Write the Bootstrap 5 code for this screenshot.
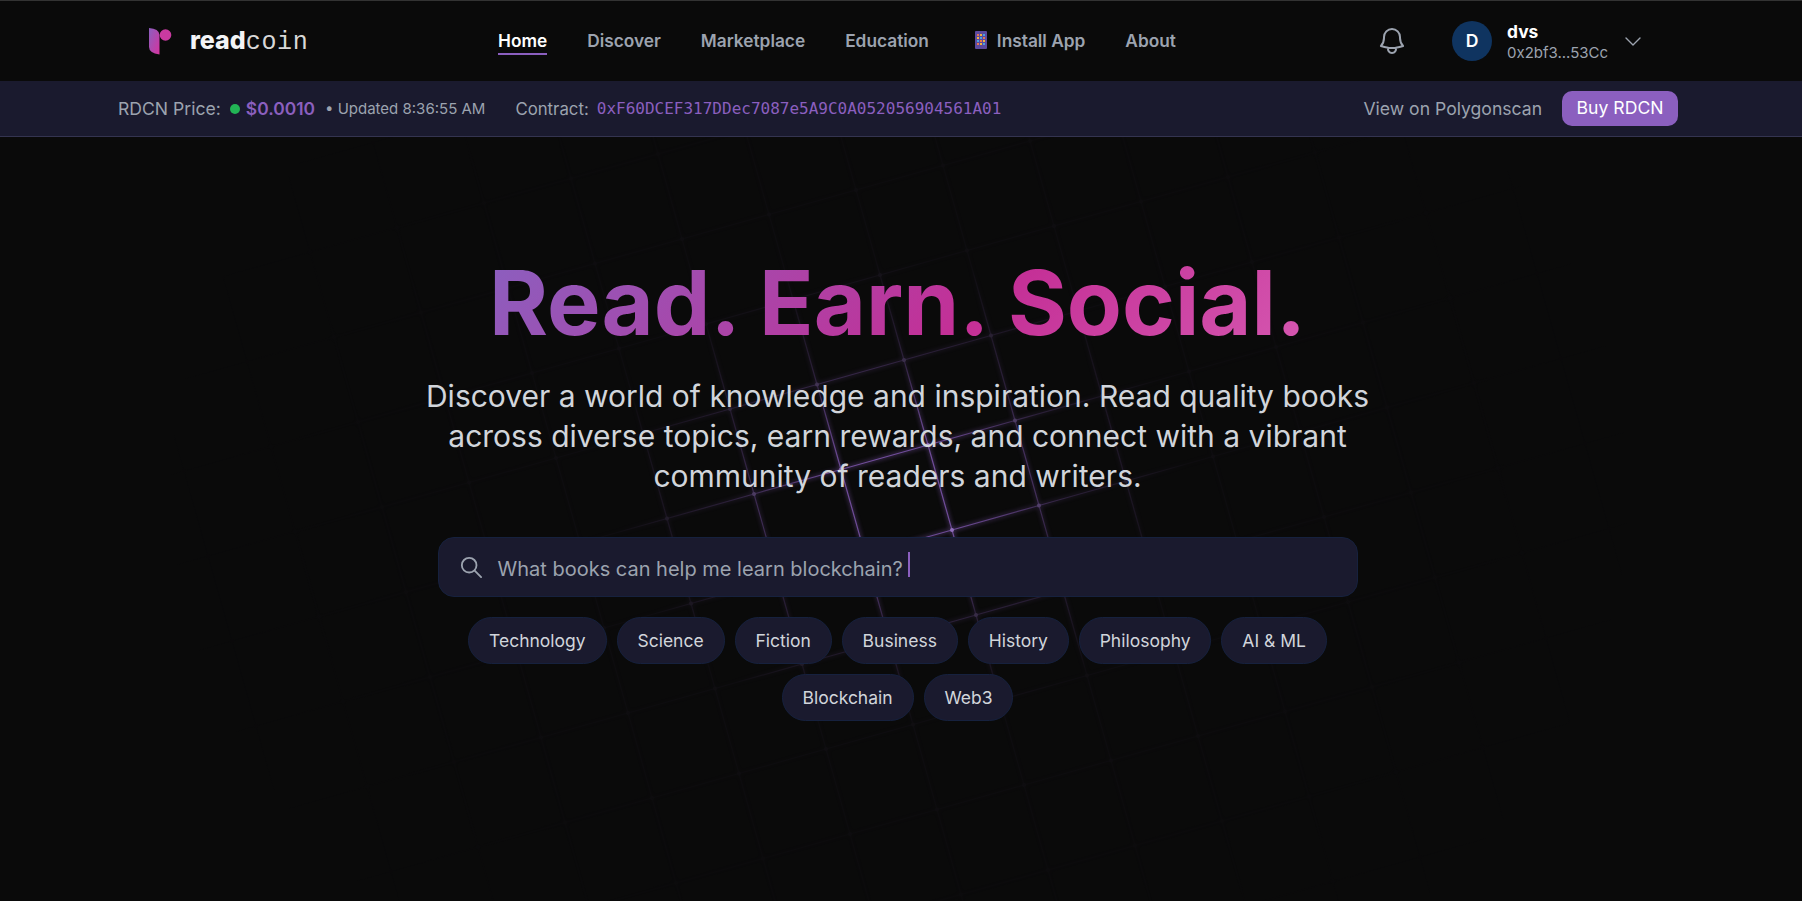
<!DOCTYPE html>
<html lang="en">
<head>
    <meta charset="UTF-8">
    <meta name="viewport" content="width=device-width, initial-scale=1.0">
    <title>Readcoin</title>
    <link href="https://cdn.jsdelivr.net/npm/bootstrap@5.3.0/dist/css/bootstrap.min.css" rel="stylesheet">
    <style>
        body {
            background: #0a0a0a;
            font-family: Inter, "Liberation Sans", sans-serif;
            color: #d1d5db;
            min-height: 901px;
            overflow: hidden;
        }
        .top-nav {
            height: 81px;
            border-top: 1px solid #333;
            padding-left: 148px;
        }
        .brand-mark { width: 24px; height: 28px; margin-right: 18px; }
        .brand-name { font-size: 25px; color: #f3f4f6; font-weight: 800; line-height: 30px; margin-top: 1px; }
        .brand-name span { font-family: "Liberation Mono", monospace; font-weight: 400; letter-spacing: .7px; color: #d8d8d8; }
        .main-links { position: absolute; left: 498px; top: 29px; gap: 40px; }
        .main-link { font-size: 17.3px; font-weight: 600; color: #9ca3af; text-decoration: none; line-height: 22px; padding-bottom: 1px; border-bottom: 2px solid transparent; }
        .main-link.active { color: #fff; font-weight: 600; border-bottom-color: #8b5fbf; }
        .app-glyph { width: 12px; height: 18px; margin-left: 6px; margin-right: 10px; vertical-align: -2px; }
        .user-box { position: absolute; left: 1376px; top: 0; height: 80px; }
        .avatar-d { width: 40px; height: 40px; background: #0f3460; color: #fff; font-weight: 600; font-size: 17.6px; margin: 0 15px 0 44px; }
        .user-info { margin-top: 2px; }
        .user-name { font-size: 17.4px; font-weight: 700; color: #fff; line-height: 22px; }
        .user-addr { font-size: 15px; color: #9ca3af; line-height: 20px; }
        .price-bar {
            height: 56px;
            background: #1a1a2e;
            border-bottom: 1px solid #343450;
            padding-left: 118px;
            padding-right: 124px;
            padding-top: 2px;
            font-size: 17.6px;
            color: #9ca3af;
        }
        .price-dot { width: 10px; height: 10px; background: #22b455; margin: 0 6px 0 9px; }
        .price-val { font-size: 17.4px; font-weight: 600; color: #8b5fbf; }
        .price-time { font-size: 15px; margin-left: 10px; }
        .contract-label { font-size: 16.8px; margin-left: 30px; }
        .contract-addr { font-family: "DejaVu Sans Mono", monospace; font-size: 16px; color: #8b5fbf; margin-left: 8px; }
        .buy-btn { background: #8b5fbf; color: #fff; font-size: 17.6px; border: 0; border-radius: 10px; padding: 0 14.5px; height: 35px; margin: -2px 0 0 20px; }
        .hero { position: relative; height: 764px; padding-right: 7px; }
        .hero-grid { position: absolute; left: 0; top: 0; }
        .hero-body { position: relative; width: 1000px; margin: 0 auto; padding-top: 121px; }
        .hero-title {
            font-size: 90px;
            font-weight: 700;
            line-height: 90px;
            margin-bottom: 28px;
            background: linear-gradient(135deg, #8b5fbf 0%, #c42f96 60%, #d557b0 100%);
            -webkit-background-clip: text;
            background-clip: text;
            color: transparent;
            display: inline-block;
        }
        .hero-sub { font-size: 30px; line-height: 40px; color: #d1d5db; width: 960px; margin: 0 auto 41px; }
        .search-box {
            width: 920px;
            height: 60px;
            margin: 0 auto;
            background: #1a1a2e;
            border: 1px solid #16213e;
            border-radius: 16px;
            padding-left: 21px;
            font-size: 20px;
            color: #9ca3af;
        }
        .search-text { margin-left: 16px; padding-top: 3px; }
        .caret-bar { width: 2px; height: 25px; background: #8b5fbf; margin-left: 5px; margin-top: -5px; }
        .chip-row { width: 920px; margin: 20px auto 0; gap: 10px; }
        .topic-chip {
            background: #1a1a2e;
            border: 1px solid #16213e;
            border-radius: 24px;
            color: #d1d5db;
            font-size: 17.5px;
            padding: 0 19.9px;
            height: 47px;
            line-height: 45px;
        }
    </style>
</head>
<body>
    <nav class="top-nav d-flex align-items-center position-relative">
        <svg class="brand-mark" viewBox="0 0 24 28">
            <defs>
                <linearGradient id="logoGrad" x1="0" y1="0" x2="1" y2="1">
                    <stop offset="0" stop-color="#8b5fbf"/>
                    <stop offset="1" stop-color="#d6339f"/>
                </linearGradient>
            </defs>
            <path d="M1 1 Q11 1.5 11.5 8 L11.5 27.5 Q1 26 1 20 Z" fill="url(#logoGrad)"/>
            <circle cx="17.5" cy="8" r="5.8" fill="#c93aa0"/>
        </svg>
        <div class="brand-name">read<span>coin</span></div>
        <div class="main-links d-flex">
            <a class="main-link active" href="#">Home</a>
            <a class="main-link" href="#">Discover</a>
            <a class="main-link" href="#">Marketplace</a>
            <a class="main-link" href="#">Education</a>
            <a class="main-link" href="#"><svg class="app-glyph" viewBox="0 0 12 18"><rect width="12" height="18" rx="1" fill="#5b4a9e"/><g id="appDots"></g></svg>Install App</a>
            <a class="main-link" href="#">About</a>
        </div>
        <div class="user-box d-flex align-items-center">
            <svg width="32" height="32" viewBox="0 0 24 24" fill="none" stroke="#9ca3af" stroke-width="1.5" stroke-linecap="round" stroke-linejoin="round">
                <path d="M14.857 17.082a23.848 23.848 0 0 0 5.454-1.31A8.967 8.967 0 0 1 18 9.75V9A6 6 0 0 0 6 9v.75a8.967 8.967 0 0 1-2.312 6.022c1.733.64 3.56 1.085 5.455 1.31m5.714 0a24.255 24.255 0 0 1-5.714 0m5.714 0a3 3 0 1 1-5.714 0"/>
            </svg>
            <div class="avatar-d rounded-circle d-flex align-items-center justify-content-center">D</div>
            <div class="user-info">
                <div class="user-name">dvs</div>
                <div class="user-addr">0x2bf3...53Cc</div>
            </div>
            <svg class="ms-3" width="18" height="18" viewBox="0 0 18 18" fill="none" stroke="#9ca3af" stroke-width="1.4" stroke-linecap="round" stroke-linejoin="round"><path d="M2 6 L9 13 L16 6"/></svg>
        </div>
    </nav>

    <div class="price-bar d-flex align-items-center justify-content-between">
        <div class="d-flex align-items-center">
            <span>RDCN Price:</span>
            <span class="price-dot rounded-circle"></span>
            <span class="price-val">$0.0010</span>
            <span class="price-time">• Updated 8:36:55 AM</span>
            <span class="contract-label">Contract:</span>
            <span class="contract-addr">0xF60DCEF317DDec7087e5A9C0A052056904561A01</span>
        </div>
        <div class="d-flex align-items-center">
            <span>View on Polygonscan</span>
            <button class="buy-btn">Buy RDCN</button>
        </div>
    </div>

    <main class="hero">
        <svg class="hero-grid" id="grid" width="1802" height="764"></svg>
        <div class="hero-body text-center">
            <h1 class="hero-title">Read. Earn. Social.</h1>
            <p class="hero-sub">Discover a world of knowledge and inspiration. Read quality books across diverse topics, earn rewards, and connect with a vibrant community of readers and writers.</p>
            <div class="search-box d-flex align-items-center">
                <svg width="22" height="22" viewBox="0 0 24 24" fill="none" stroke="#9ca3af" stroke-width="2" stroke-linecap="round"><circle cx="10" cy="10" r="8"/><path d="M16 16 L23 23"/></svg>
                <span class="search-text">What books can help me learn blockchain?</span>
                <span class="caret-bar"></span>
            </div>
            <div class="chip-row d-flex flex-wrap justify-content-center">
                <span class="topic-chip">Technology</span>
                <span class="topic-chip">Science</span>
                <span class="topic-chip">Fiction</span>
                <span class="topic-chip">Business</span>
                <span class="topic-chip">History</span>
                <span class="topic-chip">Philosophy</span>
                <span class="topic-chip">AI &amp; ML</span>
                <span class="topic-chip">Blockchain</span>
                <span class="topic-chip">Web3</span>
            </div>
        </div>
    </main>

    <script>
        // little coloured app squares on the phone glyph
        const dotColors = ['#e8774f', '#f2b33d', '#4aa3e0'];
        let dots = '';
        for (let r = 0; r < 4; r++) {
            for (let c = 0; c < 3; c++) {
                dots += `<rect x="${2 + c * 3}" y="${3 + r * 3}" width="2" height="2" fill="${dotColors[(r + c) % 3]}"/>`;
            }
        }
        document.getElementById('appDots').innerHTML = dots;

        // glowing skewed grid behind the hero, node positions read off the screenshot
        const ox = 952, oy = 393;
        const ax = 87, ay = -24.5, bx = 24, by = 85;
        let lines = '', nodes = '';
        for (let i = -12; i <= 12; i++) {
            for (let j = -6; j <= 6; j++) {
                const x = ox + i * ax + j * bx;
                const y = oy + i * ay + j * by;
                lines += `<path d="M${x} ${y} L${x + ax} ${y + ay} M${x} ${y} L${x + bx} ${y + by}"/>`;
                nodes += `<circle cx="${x}" cy="${y}" r="2"/>`;
            }
        }
        document.getElementById('grid').innerHTML = `
            <defs>
                <radialGradient id="fade" gradientUnits="userSpaceOnUse" cx="900" cy="355" r="760" gradientTransform="translate(900 355) scale(1 .8) translate(-900 -355)">
                    <stop offset="0" stop-color="#fff" stop-opacity="1"/>
                    <stop offset=".1" stop-color="#fff" stop-opacity=".85"/>
                    <stop offset=".22" stop-color="#fff" stop-opacity=".3"/>
                    <stop offset=".38" stop-color="#fff" stop-opacity=".04"/>
                    <stop offset=".75" stop-color="#fff" stop-opacity=".012"/>
                    <stop offset="1" stop-color="#fff" stop-opacity="0"/>
                </radialGradient>
                <mask id="fadeMask"><rect width="1802" height="764" fill="url(#fade)"/></mask>
                <filter id="glow"><feGaussianBlur stdDeviation="2"/></filter>
            </defs>
            <g mask="url(#fadeMask)">
                <g stroke="#8b5fbf" stroke-width="3" opacity=".45" filter="url(#glow)">${lines}</g>
                <g stroke="#8b5fbf" stroke-width="1.2" opacity=".85">${lines}</g>
                <g fill="#a67fd8">${nodes}</g>
            </g>`;
    </script>
    <script src="https://cdn.jsdelivr.net/npm/bootstrap@5.3.0/dist/js/bootstrap.bundle.min.js"></script>
</body>
</html>
